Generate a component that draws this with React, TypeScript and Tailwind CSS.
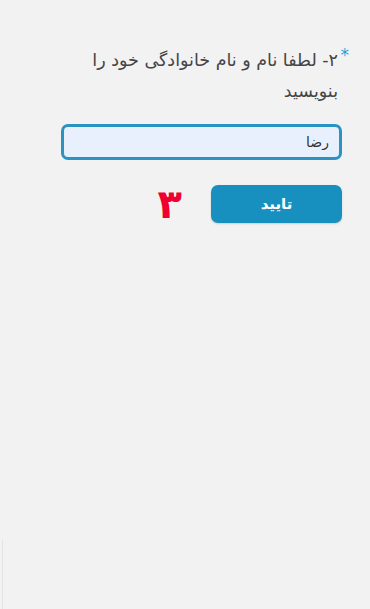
import React from 'react';

const App = () => {
  const [name, setName] = React.useState('رضا');

  return (
    <div
      dir="rtl"
      className="min-h-[609px] w-full bg-[#f2f2f2] relative"
      style={{ fontFamily: '"DejaVu Sans", "Noto Sans", sans-serif' }}
    >
      <div className="absolute left-[2px] top-[540px] bottom-0 w-px bg-[#e4e4e4]"></div>
      <div className="pr-[30px] pl-[58px] pt-[45px]">
        {/* Question */}
        <div className="relative pr-[2px] pl-[30px] text-[17.5px] leading-[31px] text-[#444]">
          <span className="absolute right-[-9px] top-[-5px] text-[17px] text-[#2aa3d6]">*</span>
          ۲- لطفا نام و نام خانوادگی خود را بنویسید
        </div>

        {/* Input */}
        <input
          value={name}
          onChange={(e) => setName(e.target.value)}
          className="mt-[17px] block w-[281px] h-[36px] mr-[-2px] rounded-[7px] border-[3px] border-[#2a93c2] bg-[#e8f0fe] px-[10px] text-[14px] text-[#333] outline-none"
        />

        {/* Actions */}
        <div className="mt-[24px] flex items-center gap-[29px] mr-[-2px]">
          <button className="w-[131px] h-[38px] rounded-[7px] bg-[#1890bf] text-white text-[15px] font-bold shadow-[0_1px_2px_rgba(0,0,0,0.15)]">
            تایید
          </button>
          <span className="text-[40px] leading-none font-bold text-[#f0002e]">۳</span>
        </div>
      </div>
    </div>
  );
};

export default App;
